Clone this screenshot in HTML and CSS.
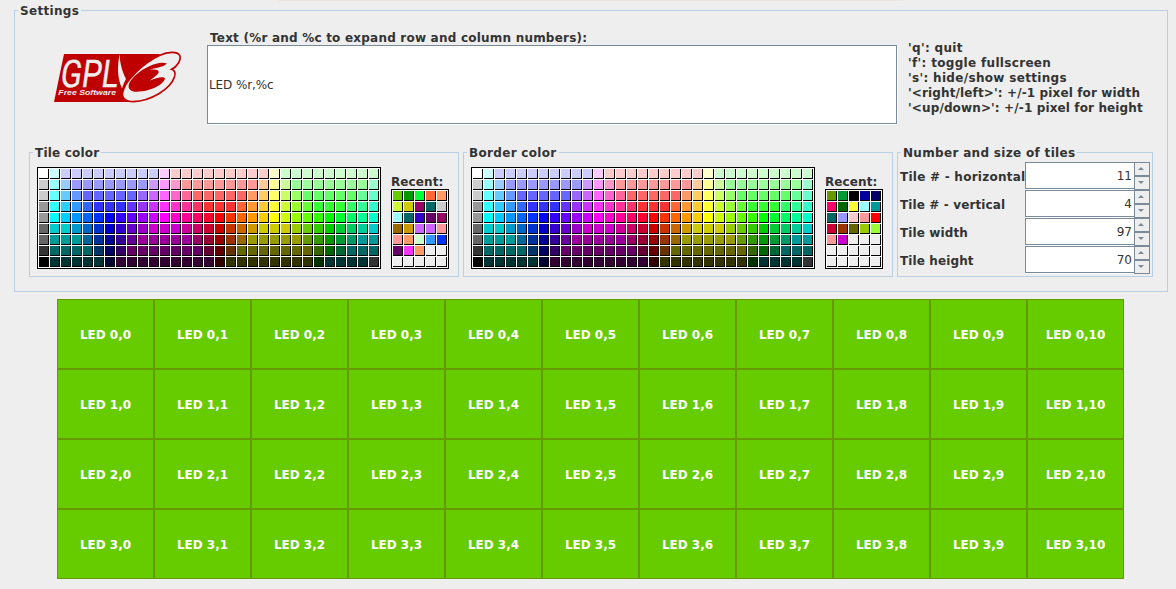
FILE: index.html
```html
<!DOCTYPE html>
<html lang="en">
<head>
<meta charset="utf-8">
<title>LED tiles</title>
<link rel="stylesheet" href="styles.css">
</head>
<body>
<div class="edge"></div>
<fieldset class="group settings">
  <legend class="wide">Settings</legend>
  <div class="top">
    <svg class="logo" viewBox="0 0 435 195" role="img" aria-label="GPL v3 Free Software">
      <path fill="#bf0000" d="M57 27H345L250 171H27Z"/>
      <path fill="#eee" stroke="#bf0000" stroke-width="5" d="M345 31C368 19 398 19 404 31C410 45 395 66 380 73C389 76 393 84 388 97C376 133 317 168 265 170C242 170 229 159 233 142C239 108 293 55 345 31Z"/>
      <path fill="#bf0000" d="M365 55C340 48 300 66 275 88C247 112 242 135 268 140C310 143 357 120 360 100C356 93 336 97 314 107C326 98 341 88 341 81C341 74 330 72 314 75C326 69 361 67 365 55Z"/>
      <path fill="#eee" d="M224 27C224 53 232 80 243 102Q236 114 231 130C216 98 217 60 224 27Z"/>
      <text class="logo-name" transform="translate(43 127) skewX(-8)" textLength="173" lengthAdjust="spacingAndGlyphs">GPL</text>
      <text class="logo-sub" x="40" y="149" textLength="173" lengthAdjust="spacingAndGlyphs">Free Software</text>
    </svg>
    <label class="caption"><span>Text (%r and %c to expand row and column numbers):</span>
      <input class="text-input" value="LED %r,%c">
    </label>
    <div class="help">
      <div class="wide">'q': quit</div>
      <div class="wide">'f': toggle fullscreen</div>
      <div class="wide">'s': hide/show settings</div>
      <div>'&lt;right/left&gt;': +/-1 pixel for width</div>
      <div>'&lt;up/down&gt;': +/-1 pixel for height</div>
    </div>
  </div>
  <div class="panels">
    <fieldset class="group chooser">
      <legend>Tile color</legend>
      <div class="chooser-body">
        <div class="swatches main"></div>
        <div><div class="recent-label">Recent:</div><div class="swatches recent" data-colors="6c0 090 0f3 f63 f96 cf3 cc0 906 066 ccc 9ff 066 30c 606 906 960 c90 c6f c6f f99 f99 f96 cfc 39f 03f 606 f3f f96"></div></div>
      </div>
    </fieldset>
    <fieldset class="group chooser">
      <legend class="wide">Border color</legend>
      <div class="chooser-body">
        <div class="swatches main"></div>
        <div><div class="recent-label">Recent:</div><div class="swatches recent" data-colors="690 093 000 009 006 f06 060 ff3 9ff 099 066 99f fcc f99 f00 c03 930 660 9c0 9f3 f99 c0c"></div></div>
      </div>
    </fieldset>
    <fieldset class="group sizes">
      <legend class="wide">Number and size of tiles</legend>
      <div class="size-rows">
        <div class="size-row"><span class="horizontal">Tile # - horizontal</span><div class="field">11</div><div class="steps"><i class="up"></i><i class="down"></i></div></div>
        <div class="size-row"><span>Tile # - vertical</span><div class="field">4</div><div class="steps"><i class="up"></i><i class="down"></i></div></div>
        <div class="size-row"><span>Tile width</span><div class="field">97</div><div class="steps"><i class="up"></i><i class="down"></i></div></div>
        <div class="size-row"><span>Tile height</span><div class="field">70</div><div class="steps"><i class="up"></i><i class="down"></i></div></div>
      </div>
    </fieldset>
  </div>
</fieldset>
<div class="tiles"></div>
<script src="app.js"></script>
</body>
</html>
```
FILE: styles.css
```css
* { box-sizing: border-box; }
body {
  margin: 0;
  height: 589px;
  overflow: hidden;
  background: #eee;
  color: #333;
  font: bold 12px/15px "DejaVu Sans", sans-serif;
}
.edge { height: 1px; width: 625px; margin-left: 278px; background: #eee6de; }
.group { margin: 0; padding: 0; border: 1px solid #b8cfe5; min-width: 0; }
legend {
  height: 15px;
  margin-left: 3px;
  padding: 0 2px;
  line-height: 17px;
  letter-spacing: 0.2px;
  white-space: nowrap;
}
.wide { letter-spacing: 0.32px; }
.settings { width: 1154px; height: 289px; margin: 2px 0 0 14px; }
.top { display: flex; height: 127px; }
.logo { width: 145px; height: 65px; margin: 27px 17px 0 30px; }
.logo-name { font: 114px Roboto, "Liberation Sans", sans-serif; fill: #eee; stroke: #eee; stroke-width: 1; }
.logo-sub { font: italic bold 23px "Liberation Sans", sans-serif; fill: #eee; }
.caption { width: 690px; padding-top: 12px; }
.caption span {
  display: block;
  height: 15px;
  padding-left: 3px;
  line-height: 17px;
  letter-spacing: 0.215px;
  white-space: nowrap;
}
.text-input {
  display: block;
  width: 690px;
  height: 79px;
  padding: 0 1px;
  border: 1px solid #7a8a99;
  border-radius: 0;
  outline: 0;
  background: #fff;
  box-shadow: 1px 1px #fff;
  color: #333;
  font: 12px "DejaVu Sans", sans-serif;
  letter-spacing: -0.1px;
}
.help { padding: 23px 0 0 11px; white-space: nowrap; }
.help div:not(.wide) { letter-spacing: 0.13px; }
.panels { display: flex; padding-left: 14px; }
.chooser { width: 430px; height: 132px; margin-right: 4px; }
.chooser-body { display: flex; gap: 10px; align-items: flex-end; padding: 7px 0 0 7px; }
.swatches {
  display: grid;
  gap: 1px;
  grid-auto-rows: 10px;
  padding: 1px;
  border: 1px solid #000;
  background: #fff;
}
.main { grid-template-columns: repeat(31, 10px); }
.recent { width: 58px; grid-template-columns: repeat(5, 10px); }
.recent-label { height: 15px; line-height: 17px; letter-spacing: 0.1px; }
.swatches i { border: solid #000; border-width: 0 1px 1px 0; background: #eee; }
.sizes { width: 256px; height: 132px; }
.size-rows { padding: 2px 0 0 2px; }
.size-row { display: flex; height: 28px; }
.size-row span { width: 125px; padding-top: 8px; white-space: nowrap; letter-spacing: 0.12px; }
.size-row .horizontal { letter-spacing: 0.25px; }
.field {
  width: 109px;
  height: 27px;
  padding: 6px 2px 0 0;
  border: 1px solid #7a8a99;
  border-right: 0;
  background: #fff;
  box-shadow: 0 1px #fff;
  text-align: right;
  font-weight: normal;
}
.steps { width: 16px; height: 28px; display: grid; grid-template-rows: 14px 14px; }
.steps i {
  display: flex;
  align-items: center;
  justify-content: center;
  padding: 0 2px 1px 0;
  border: 1px solid #7a8a99;
}
.steps i::before { content: ""; border: 3px solid transparent; }
.steps .up::before { border-top: 0; border-bottom-color: #7a8a99; }
.steps .down::before { border-bottom: 0; border-top-color: #7a8a99; }
.tiles { display: grid; grid-template-columns: repeat(11, 97px); grid-auto-rows: 70px; margin: 7px 0 0 57px; }
.tile {
  display: flex;
  align-items: center;
  justify-content: center;
  padding-top: 2px;
  border: 1px solid #690;
  background: #6c0;
  color: #fff;
}
```
FILE: app.js
```js
// Palette rows; "color*n" repeats a color n times.
const PALETTE = [
  'fff cff ccf*9 fcf fcc*9 ffc cfc*9',
  'ccc 9ff 9cf 99f*7 c9f f9f f9c f99*7 fc9 ff9 cf9 9f9*7 9fc',
  'ccc 6ff 6cf 69f 66f*5 96f c6f f6f f6c f69 f66*5 f96 fc6 ff6 cf6 9f6 6f6*5 6f9 6fc',
  '999 3ff 3cf 39f 36f 33f*3 63f 93f c3f f3f f3c f39 f36 f33*3 f63 f93 fc3 ff3 cf3 9f3 6f3 3f3*3 3f6 3f9 3fc',
  '999 0ff 0cf 09f 06f 03f 00f 30f 60f 90f c0f f0f f0c f09 f06 f03 f00 f30 f60 f90 fc0 ff0 cf0 9f0 6f0 3f0 0f0 0f3 0f6 0f9 0fc',
  '666 0cc*2 09c 06c 03c 00c 30c 60c 90c c0c*3 c09 c06 c03 c00 c30 c60 c90 cc0*3 9c0 6c0 3c0 0c0 0c3 0c6 0c9 0cc',
  '666 099*3 069 039 009 309 609 909*5 906 903 900 930 960 990*5 690 390 090 093 096 099*2',
  '333 066*4 036 006 306 606*7 603 600 630 660*7 360 060 063 066*3',
  '000 033*5 003 303*9 300 330*8 030 033*4 333'
];

function addSwatch(parent, color) {
  const cell = document.createElement('i');
  if (color) cell.style.backgroundColor = '#' + color;
  parent.append(cell);
}

document.querySelectorAll('.main').forEach(grid => {
  PALETTE.join(' ').split(' ').forEach(entry => {
    const [color, count = 1] = entry.split('*');
    for (let i = 0; i < count; i++) addSwatch(grid, color);
  });
});

document.querySelectorAll('.recent').forEach(grid => {
  const colors = grid.dataset.colors.split(' ');
  for (let i = 0; i < 35; i++) addSwatch(grid, colors[i]);
});

const tiles = document.querySelector('.tiles');
for (let row = 0; row < 4; row++) {
  for (let col = 0; col < 11; col++) {
    const tile = document.createElement('div');
    tile.className = 'tile';
    tile.textContent = `LED ${row},${col}`;
    tiles.append(tile);
  }
}
```
